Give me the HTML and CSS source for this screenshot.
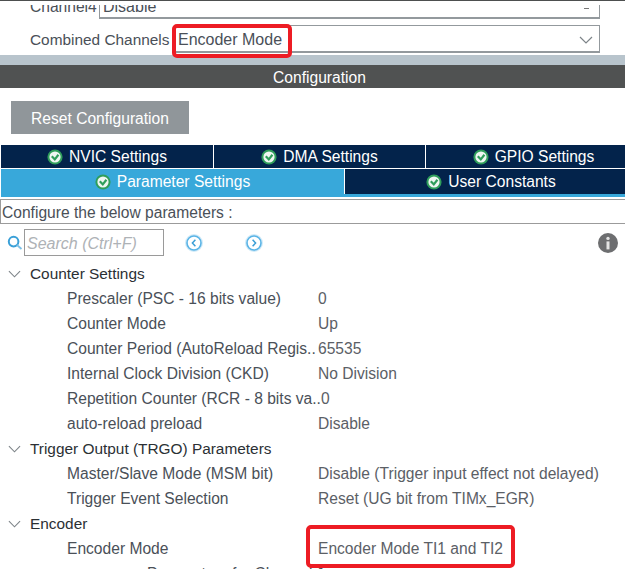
FILE: index.html
```html
<!DOCTYPE html>
<html lang="en">
<head>
<meta charset="utf-8">
<title>Configuration</title>
<link rel="stylesheet" href="styles.css">
</head>
<body>
<svg class="defs" width="0" height="0" aria-hidden="true">
  <symbol id="ok" viewBox="0 0 16 16">
    <circle cx="8" cy="8" r="7.6" fill="#2f9e5b"/>
    <circle cx="8" cy="8" r="5.6" fill="#eef6f1"/>
    <path d="M4.8 7.2 7.8 10.4 11.4 5.8" fill="none" stroke="#2f9e5b" stroke-width="2.2"/>
  </symbol>
  <symbol id="chev" viewBox="0 0 14 8">
    <path d="M1 1 7 7 13 1" fill="none" stroke="#7d8488" stroke-width="1.2"/>
  </symbol>
</svg>
<div class="page">
  <div class="mode">
    <div class="mode-row clipped">
      <span class="mode-label">Channel4</span>
      <div class="field"><span>Disable</span><span class="dash"></span></div>
    </div>
    <div class="mode-row">
      <span class="mode-label">Combined Channels</span>
      <div class="field field-main"><span>Encoder Mode</span><svg class="chev-field"><use href="#chev"/></svg></div>
    </div>
  </div>
  <div class="band"></div>
  <div class="title">Configuration</div>
  <div class="reset-wrap"><button class="reset">Reset Configuration</button></div>
  <div class="tabs">
    <div class="tab-row row-a">
      <div class="tab"><svg class="ok"><use href="#ok"/></svg>NVIC Settings</div>
      <div class="tab"><svg class="ok"><use href="#ok"/></svg>DMA Settings</div>
      <div class="tab"><svg class="ok"><use href="#ok"/></svg>GPIO Settings</div>
    </div>
    <div class="tab-row row-b">
      <div class="tab active"><svg class="ok"><use href="#ok"/></svg>Parameter Settings</div>
      <div class="tab"><svg class="ok"><use href="#ok"/></svg>User Constants</div>
    </div>
  </div>
  <div class="hint">Configure the below parameters :</div>
  <div class="search-row">
    <svg class="magnifier" viewBox="0 0 16 16"><circle cx="6.6" cy="6.6" r="4.8" fill="none" stroke="#3aa0d8" stroke-width="2"/><path d="M10 10 14.5 14" stroke="#7cc0e6" stroke-width="1.8"/></svg>
    <div class="search">Search (Ctrl+F)</div>
    <svg class="nav nav-prev" viewBox="0 0 18 18"><circle cx="9" cy="9" r="8" fill="none" stroke="#d3ebf8" stroke-width="2"/><circle cx="9" cy="9" r="7" fill="none" stroke="#5ab4e6" stroke-width="1.6"/><path d="M10.4 5.8 7.4 9l3 3.2" fill="none" stroke="#3a9ed6" stroke-width="1.5"/></svg>
    <svg class="nav nav-next" viewBox="0 0 18 18"><circle cx="9" cy="9" r="8" fill="none" stroke="#d3ebf8" stroke-width="2"/><circle cx="9" cy="9" r="7" fill="none" stroke="#5ab4e6" stroke-width="1.6"/><path d="M7.6 5.8 10.6 9l-3 3.2" fill="none" stroke="#3a9ed6" stroke-width="1.5"/></svg>
    <svg class="info" viewBox="0 0 20 20"><circle cx="10" cy="10" r="10" fill="#6d6e70"/><rect x="8.5" y="8.4" width="3" height="8" fill="#e4e4e4"/><circle cx="10" cy="5.4" r="1.7" fill="#e4e4e4"/></svg>
  </div>
  <div class="tree">
    <div class="group"><svg class="chev-tree"><use href="#chev"/></svg>Counter Settings</div>
    <div class="param"><span class="name">Prescaler (PSC - 16 bits value)</span><span class="value">0</span></div>
    <div class="param"><span class="name">Counter Mode</span><span class="value">Up</span></div>
    <div class="param"><span class="name">Counter Period (AutoReload Regis..</span><span class="value">65535</span></div>
    <div class="param"><span class="name">Internal Clock Division (CKD)</span><span class="value">No Division</span></div>
    <div class="param"><span class="name">Repetition Counter (RCR - 8 bits va..</span><span class="value">0</span></div>
    <div class="param"><span class="name">auto-reload preload</span><span class="value">Disable</span></div>
    <div class="group"><svg class="chev-tree"><use href="#chev"/></svg>Trigger Output (TRGO) Parameters</div>
    <div class="param"><span class="name">Master/Slave Mode (MSM bit)</span><span class="value">Disable (Trigger input effect not delayed)</span></div>
    <div class="param"><span class="name">Trigger Event Selection</span><span class="value">Reset (UG bit from TIMx_EGR)</span></div>
    <div class="group"><svg class="chev-tree"><use href="#chev"/></svg>Encoder</div>
    <div class="param"><span class="name">Encoder Mode</span><span class="value">Encoder Mode TI1 and TI2</span></div>
    <div class="param sub"><span class="name">Parameters for Channel 1</span></div>
  </div>
  <div class="mark mark-a"></div>
  <div class="mark mark-b"></div>
</div>
</body>
</html>
```
FILE: styles.css
```css
html, body {
  margin: 0;
  padding: 0;
  background: #fff;
}
.defs { position: absolute; }
.page {
  position: relative;
  width: 625px;
  height: 569px;
  overflow: hidden;
  font-family: "Liberation Sans", Arial, sans-serif;
  font-size: 15.6px;
  color: #4a5058;
  border-top: 1px solid #4d4f4f;
  box-sizing: border-box;
}
.mode { height: 54px; overflow: hidden; }
.mode-row {
  display: flex;
  align-items: center;
  height: 28px;
  padding-left: 30px;
}
.clipped {
  height: 14px;
  margin: 4px 0 6px;
  align-items: flex-start;
  overflow: hidden;
}
.mode-label { width: 145px; flex: none; white-space: nowrap; padding-top: 2px; font-size: 15.4px; }
.clipped .mode-label {
  width: 69px;
  height: 18px;
  line-height: 18px;
  padding-top: 0;
  margin-top: -7px;
  font-size: 15.6px;
}
.field {
  box-sizing: border-box;
  width: 425px;
  height: 28px;
  display: flex;
  align-items: center;
  justify-content: space-between;
  padding: 2px 6px 0 2px;
  border: 1px solid #93999d;
  border-bottom-width: 2px;
  border-left-color: #c5c9cc;
  font-size: 16px;
}
.clipped .field {
  width: 501px;
  height: 14px;
  padding: 0 10px 0 3px;
  border-top: none;
  border-left-color: #93999d;
  align-items: flex-start;
}
.clipped .field span:first-child { line-height: 18px; margin-top: -7px; }
.dash { width: 5px; height: 1px; background: #777; margin-top: 3px; }
.chev-field { width: 14px; height: 8px; }
.band { height: 10px; background: #b8c4cc; }
.title {
  height: 23px;
  line-height: 25px;
  background: #505252;
  color: #fff;
  text-align: center;
  padding-left: 14px;
  box-sizing: border-box;
}
.reset-wrap { padding: 13px 0 11px 11px; }
.reset {
  display: block;
  width: 178px;
  height: 33px;
  border: none;
  padding: 2px 0 0;
  background: #90969a;
  color: #fff;
  font: inherit;
}
.tabs { padding-left: 1px; display: flex; flex-direction: column; }
.tab-row { display: flex; gap: 1px; }
.row-a { height: 23px; margin-bottom: 1px; }
.row-b { height: 25px; border-bottom: 3px solid #38a8da; }
.tab {
  display: flex;
  align-items: center;
  justify-content: center;
  background: #03234b;
  color: #fff;
  white-space: nowrap;
}
.row-a .tab { flex: 0 0 212px; }
.row-a .tab:nth-child(2) { flex-basis: 211px; }
.row-a .tab:nth-child(3) { flex-basis: 215px; }
.row-b .tab { flex: 0 0 292px; }
.row-b .active { flex: 0 0 343px; background: #38a8da; }
.ok { width: 16px; height: 16px; margin-right: 6px; }
.hint {
  box-sizing: border-box;
  margin-top: 2px;
  height: 25px;
  line-height: 26px;
  padding-left: 1px;
  border: solid #9b9b9b;
  border-width: 1px 0 1px 1px;
  white-space: nowrap;
}
.search-row {
  position: relative;
  display: flex;
  align-items: center;
  height: 27px;
  margin-top: 5px;
  padding-left: 7px;
}
.magnifier { width: 16px; height: 16px; margin-right: 1px; }
.search {
  box-sizing: border-box;
  width: 140px;
  height: 27px;
  line-height: 27px;
  padding-left: 2px;
  border: 1px solid #9a9a9a;
  color: #aeb2b6;
  font-style: italic;
  font-size: 16px;
}
.nav { width: 18px; height: 18px; }
.nav-prev { margin-left: 21px; }
.nav-next { margin-left: 42px; }
.info { width: 20px; height: 20px; margin-left: auto; margin-right: 7px; }
.tree { margin-top: 5px; }
.group, .param {
  display: flex;
  align-items: center;
  height: 25px;
  white-space: nowrap;
}
.group { color: #2b3034; padding-left: 8px; font-size: 15.4px; }
.chev-tree { width: 13px; height: 8px; margin-right: 9px; }
.param { padding-left: 67px; }
.name { flex: 0 0 251px; }
.value { color: #5b6066; }
.sub { padding-left: 147px; }
.mark {
  position: absolute;
  box-sizing: border-box;
  border: 4px solid #ed1c24;
  border-radius: 5px;
}
.mark-a { left: 172px; top: 23px; width: 120px; height: 34px; }
.mark-b { left: 306px; top: 524px; width: 209px; height: 43px; }
```
